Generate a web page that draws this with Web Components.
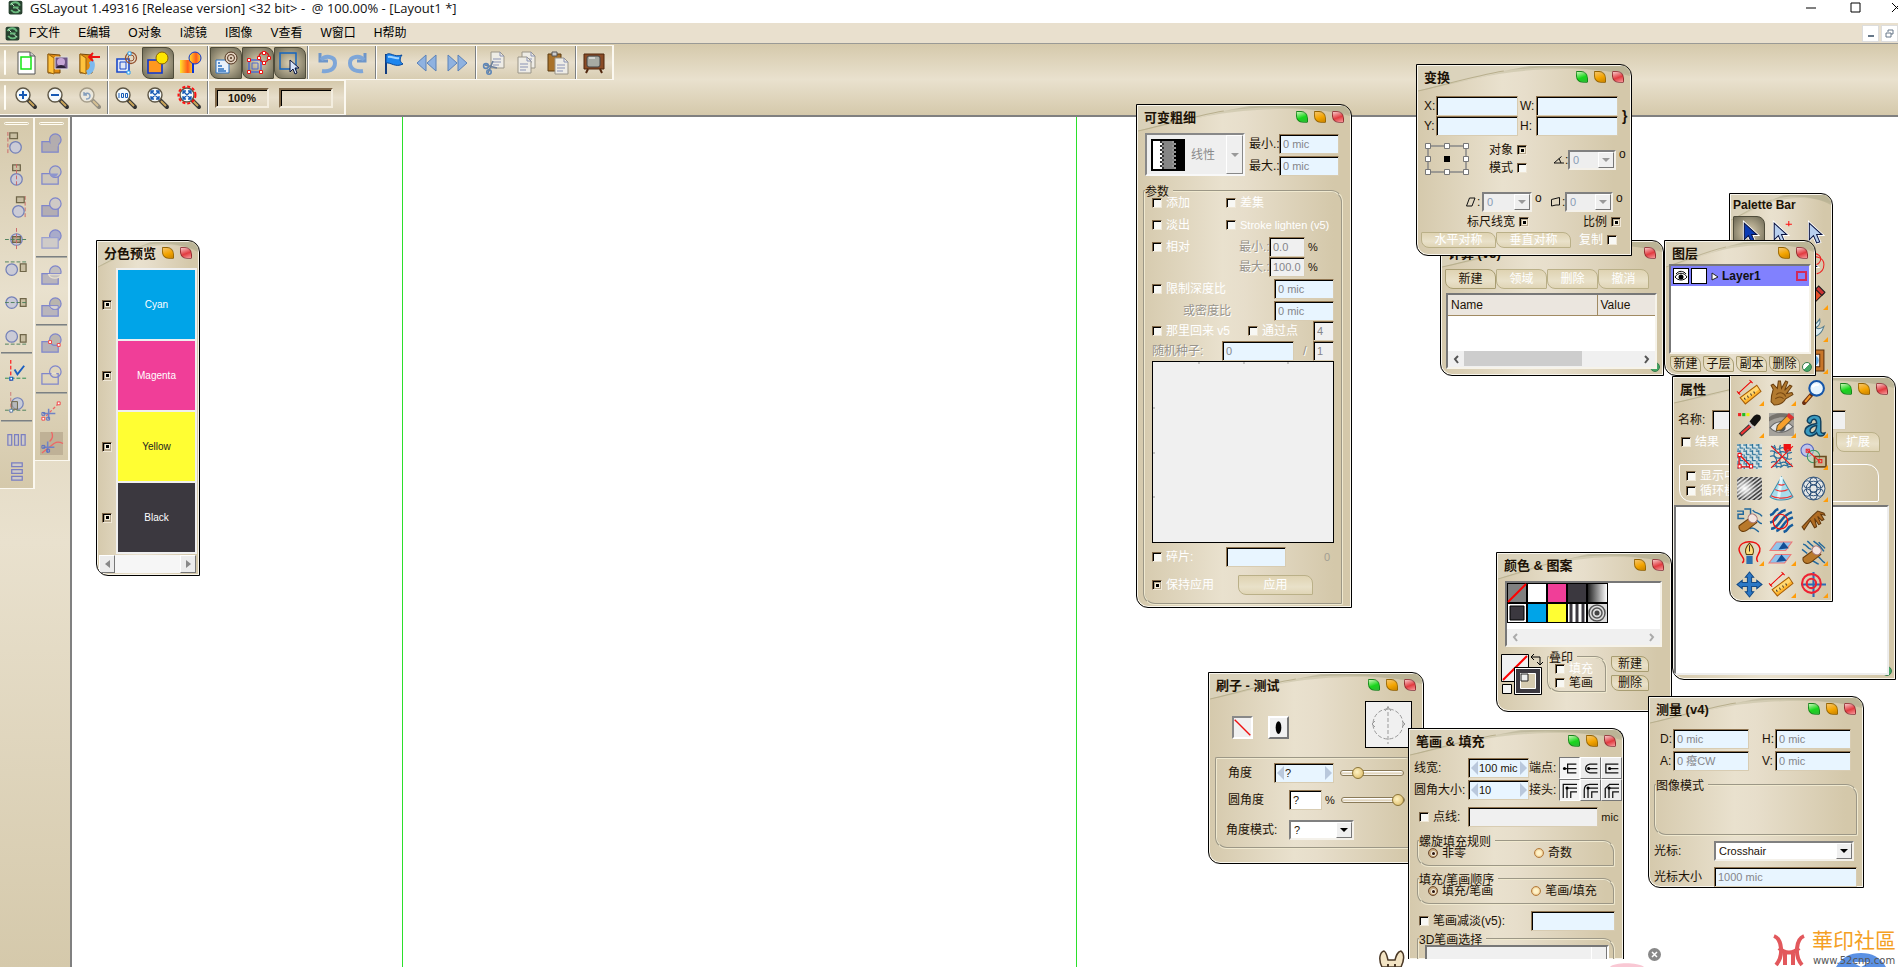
<!DOCTYPE html>
<html lang="zh-CN">
<head>
<meta charset="utf-8">
<title>GSLayout</title>
<style>
  body {
    margin: 0;
    font: 12px/16px "Liberation Sans", "Noto Sans CJK SC", sans-serif;
    color: #1c1206;
  }
</style>
</head>
<body>
<gs-app></gs-app>
<script>
const base = /* css */`
  *, *::before, *::after { box-sizing: border-box; }
  button, input, select { font: inherit; color: inherit; margin: 0; padding: 0; border-radius: 0; }
  svg { display: block; flex: none; }
`;

// Small helper: every element here is a shadow root with its own style and markup
const define = (name, styles, markup) => {
  customElements.define(name, class extends HTMLElement {
    constructor() {
      super();
      this.attachShadow({ mode: "open" });
    }

    connectedCallback() {
      const html = typeof markup === "function" ? markup(this) : markup;
      this.shadowRoot.innerHTML = `<style>${base}${styles}</style>${html}`;
    }
  });
};

const attr = (el, name, fallback = "") => el.getAttribute(name) ?? fallback;

const lens = (inner, extra = "") => `
  <path d="M14 14l7 7" stroke="#333" stroke-width="4" stroke-linecap="round"/>
  <path d="M15 15l5 5" stroke="#c9a45a" stroke-width="2"/>
  <circle cx="9" cy="9" r="7" fill="#f4f9fc" stroke="#5d5645" stroke-width="1.4"/>${inner}${extra}`;
const cursor = (fill, dx = 0) => `<path transform="translate(${dx} 0)" d="M7 3v16l4-4 3 7 3-1-3-7h5z" fill="${fill}" stroke="#fff" stroke-width="2.6"/><path transform="translate(${dx} 0)" d="M7 3v16l4-4 3 7 3-1-3-7h5z" fill="${fill}" stroke="#0b1440"/>`;
const page = (x, y) => `<path d="M${x} ${y}h9l4 4v12h-13z" fill="#eeece6" stroke="#9a9588"/><path d="M${x + 9} ${y}v4h4M${x + 2} ${y + 7}h8m-8 3h8m-8 3h6" fill="none" stroke="#8a93b5"/>`;
const folder = `<path d="M2 3l12 1v18H2z" fill="#e08a10" stroke="#7a4a08"/><path d="M2 3l6 4v16l-6-2z" fill="#ffc23c" stroke="#9a6410"/>`;
const shape = (sq, ci, extra = "") => `<path d="M2 10h17v11H2z" fill="${sq}" stroke="#7f86cb" stroke-width="1.3"/><circle cx="16" cy="8" r="6" fill="${ci}" stroke="#7f86cb" stroke-width="1.3"/>${extra}`;
const ruler = `<path d="M3 17L19 5l4 6L8 23z" fill="#ffb52e" stroke="#a85f08"/><path d="M4 17L19 6l2 3L7 20z" fill="#ffd873"/><path d="M7 17l1 2m2-4l1 2m2-4l1 2m2-4l1 2" stroke="#432"/><path d="M1 13L14 1M0 11l3 3M12 0l3 3" stroke="#e00" fill="none"/>`;
const finger = `<path d="M2 17l11-8 6 5-9 7c-4 3-9 1-8-4z" fill="#b9792b" stroke="#6b3e0b"/><ellipse cx="15" cy="10" rx="4.5" ry="4" transform="rotate(35 15 10)" fill="#f3e4df" stroke="#a77"/>`;

const icons = {
  app: `<rect x="1" y="1" width="22" height="22" rx="3" fill="#27412f"/><path d="M4 8c4-6 12-6 15 1M5 16c4 5 11 5 14 0M8 12h9" stroke="#69b97d" stroke-width="3" fill="none"/><path d="M5 5l5 5m4 3l5 5" stroke="#c9e4cd" stroke-width="1.5"/>`,
  new: `<path d="M4 1h12l5 4v18H4z" fill="#fff" stroke="#555"/><path d="M7 6h10v12H7z" fill="none" stroke="#13e613" stroke-width="1.5"/><path d="M16 1v4h5" fill="#ccc" stroke="#555"/>`,
  open: `${folder}<path d="M9 6h13v12H9z" fill="#6c5484" stroke="#ddd"/><circle cx="15" cy="11" r="4" fill="#c5a6d6"/><path d="M10 17c2-4 8-4 10 0" fill="#2b2138"/>`,
  import: `${folder}<path d="M13 10a8 8 0 0 1-4 12" fill="none" stroke="#7cb9ee" stroke-width="5"/><path d="M22 6H11m4-4l-4 4 4 4" fill="none" stroke="#e11" stroke-width="1.8"/>`,
  outline: `<path d="M3 8h12v13H3z" fill="#dfe6f5" stroke="#1b49c9" stroke-width="1.6"/><path d="M6 11h6v7H6z" fill="none" stroke="#1b49c9"/><circle cx="17" cy="7" r="5.5" fill="none" stroke="#93502f" stroke-width="1.3"/><circle cx="17" cy="7" r="3" fill="none" stroke="#93502f"/><path d="M14 1h3v3h-3zM13 20h3v3h-3z" fill="#fff" stroke="#2aa0ef"/>`,
  fill: `<path d="M2 9h14v13H2z" fill="#ff981f" stroke="#0b35d3" stroke-width="1.6"/><circle cx="16" cy="7" r="6" fill="#ffe600" stroke="#8a6400"/>`,
  grad: `<defs><linearGradient id="g"><stop offset="0" stop-color="#ffe52e"/><stop offset=".6" stop-color="#ff5b1a"/><stop offset="1" stop-color="#ffd52e"/></linearGradient></defs><path d="M2 9h13v13H2z" fill="url(#g)"/><path d="M15 12v10" stroke="#0b35d3" stroke-width="2"/><circle cx="17" cy="7" r="6" fill="url(#g)" stroke="#0b35d3"/>`,
  pattern: `<path d="M2 9h13v13H2z" fill="#e8f1fb" stroke="#2b70c0"/><path d="M4 12h2m-2 3h4m-4 3h6m-6 2h8" stroke="#2b70c0" stroke-width="1.5"/><circle cx="17" cy="7" r="6" fill="#e3d2c0" stroke="#50321d"/><circle cx="17" cy="7" r="3.5" fill="none" stroke="#50321d"/><circle cx="17" cy="7" r="1" fill="#50321d"/>`,
  nodes: `<path d="M3 9h12v12H3z" fill="none" stroke="#4f6bd0" stroke-width="1.5"/><path d="M6 12h6v6H6z" fill="none" stroke="#4f6bd0"/><circle cx="18" cy="6" r="5" fill="none" stroke="#c22" stroke-width="1.3"/><g fill="#fff" stroke="#e11"><path d="M1.500 7.500h3v3h-3zM1.500 19.500h3v3h-3zM13.500 19.500h3v3h-3zM11.500 5.500h3v3h-3zM16.500.5h3v3h-3zM21.500 5.500h3v3h-3zM16.500 10.500h3v3h-3z"/></g>`,
  select: `<path d="M2 2h16v16H2z" fill="none" stroke="#1565c0" stroke-width="1.5"/><path d="M12 9v12l3-3 2 5 2-1-2-5h4z" fill="#d7e3f8" stroke="#06123c"/>`,
  undo: `<path d="M6 2v8h8" fill="none" stroke="#6e96c9" stroke-width="3"/><path d="M7 9c4-5 14-4 14 3s-7 9-13 8" fill="none" stroke="#7ea6d8" stroke-width="4"/>`,
  redo: `<path d="M19 2v8h-8" fill="none" stroke="#6e96c9" stroke-width="3"/><path d="M18 9C14 4 4 5 4 12s7 9 13 8" fill="none" stroke="#7ea6d8" stroke-width="4"/>`,
  flag: `<path d="M4 3v20" stroke="#123d80" stroke-width="2"/><path d="M4 4c4-4 8 3 16 0-3 4-2 7 1 9-8 4-12-2-17-1z" fill="#1e86ee" stroke="#0c4a9a"/><path d="M6 6c4-1 7 2 11 1" stroke="#9fd3ff" stroke-width="2" fill="none"/>`,
  back: `<path d="M12 4v16l-9-8zM22 4v16l-9-8z" fill="#8fb2e0" stroke="#5b82b8"/>`,
  forward: `<path d="M12 4v16l9-8zM2 4v16l9-8z" fill="#8fb2e0" stroke="#5b82b8"/>`,
  cut: `${page(9, 1)}<path d="M3 14l12 3M11 10L6 22" stroke="#6b7f9c" stroke-width="1.6"/><circle cx="4" cy="15" r="2.4" fill="none" stroke="#5e87b8" stroke-width="1.6"/><circle cx="7" cy="21" r="2.2" fill="none" stroke="#5e87b8" stroke-width="1.6"/>`,
  copy: `${page(8, 1)}${page(4, 6)}`,
  paste: `<path d="M2 3h13v17H2z" fill="#a9722a" stroke="#5b3a10"/><path d="M6 1h5v4H6z" fill="#ccc" stroke="#555"/>${page(9, 7)}`,
  screen: `<path d="M2 3h20v15H2z" fill="#8a4b26" stroke="#51280f"/><rect x="5" y="5" width="13" height="11" rx="2" fill="#a7aaa3" stroke="#444"/><path d="M7 7h6" stroke="#fff"/><path d="M6 18l-2 4M18 18l2 4" stroke="#51280f" stroke-width="2"/>`,
  zoomin: lens(`<path d="M5 9h8M9 5v8" stroke="#1559b5" stroke-width="2"/>`),
  zoomout: lens(`<path d="M5 9h8" stroke="#1559b5" stroke-width="2"/>`),
  zoomback: `<g opacity=".45">${lens(`<path d="M6 6v3h3M6 9c2-3 6-2 6 1s-3 3-4 3" stroke="#1559b5" stroke-width="1.4" fill="none"/>`)}</g>`,
  zoom100: lens(`<path d="M5 7v5M7.500 7.500h2v4h-2zM11.500 7.500h2v4h-2z" stroke="#1559b5" fill="none"/>`),
  zoomfit: lens(`<path d="M5 5l8 8M13 5l-8 8M5 8V5h3M10 5h3v3M5 10v3h3M13 10v3h-3" stroke="#1559b5" stroke-width="1.3" fill="none"/>`),
  zoomall: lens(`<path d="M5 5l8 8M13 5l-8 8M5 8V5h3M10 5h3v3M5 10v3h3M13 10v3h-3" stroke="#1559b5" stroke-width="1.3" fill="none"/>`, `<circle cx="9" cy="9" r="8.5" fill="none" stroke="#f11" stroke-width="2" stroke-dasharray="3 2"/>`),

  alignleft: `<path d="M3 0v24" stroke="#c66" stroke-dasharray="4 2"/><path d="M5 1h8v6H5z" fill="#c9bfa3" stroke="#6f6649" stroke-width="1.3"/><circle cx="11" cy="16" r="6" fill="#cbcbd6" stroke="#7481b8" stroke-width="1.3"/>`,
  aligncenter: `<path d="M8 1h8v6H8z" fill="#c9bfa3" stroke="#6f6649" stroke-width="1.3"/><circle cx="12" cy="16" r="6" fill="#cbcbd6" stroke="#7481b8" stroke-width="1.3"/><path d="M12 0v24" stroke="#c66" stroke-dasharray="4 2"/>`,
  alignright: `<path d="M21 0v24" stroke="#c66" stroke-dasharray="4 2"/><path d="M12 1h8v6h-8z" fill="#c9bfa3" stroke="#6f6649" stroke-width="1.3"/><circle cx="14" cy="16" r="6" fill="#cbcbd6" stroke="#7481b8" stroke-width="1.3"/>`,
  alignmid: `<circle cx="12" cy="12" r="6" fill="#cbcbd6" stroke="#7481b8" stroke-width="1.3"/><path d="M8 9h8v6H8z" fill="#b8a88e" stroke="#6f6649" stroke-width="1.3"/><path d="M12 0v24" stroke="#c66" stroke-dasharray="4 2"/><path d="M0 12h24" stroke="#4d805c" stroke-dasharray="4 2"/>`,
  aligntop: `<path d="M0 2h24" stroke="#4d805c" stroke-dasharray="4 2"/><circle cx="7" cy="10" r="6" fill="#cbcbd6" stroke="#7481b8" stroke-width="1.3"/><path d="M16 4h6v8h-6z" fill="#c9bfa3" stroke="#6f6649" stroke-width="1.3"/>`,
  alignvert: `<circle cx="7" cy="11" r="6" fill="#cbcbd6" stroke="#7481b8" stroke-width="1.3"/><path d="M16 7h6v8h-6z" fill="#c9bfa3" stroke="#6f6649" stroke-width="1.3"/><path d="M0 11h24" stroke="#4d805c" stroke-dasharray="4 2"/>`,
  alignbottom: `<path d="M0 21h24" stroke="#4d805c" stroke-dasharray="4 2"/><circle cx="7" cy="13" r="6" fill="#cbcbd6" stroke="#7481b8" stroke-width="1.3"/><path d="M16 11h6v8h-6z" fill="#c9bfa3" stroke="#6f6649" stroke-width="1.3"/>`,
  origin: `<path d="M6 0v24" stroke="#f22" stroke-width="1.3" stroke-dasharray="4 2"/><path d="M0 19h24" stroke="#2a8a4a" stroke-dasharray="4 2"/><path d="M10 10l3 5 7-9" fill="none" stroke="#1b5fc0" stroke-width="2"/><path d="M5 18h3v3H5z" fill="#fff" stroke="#1b5fc0" stroke-width="1.3"/>`,
  originshape: `<path d="M6 0v24" stroke="#c77" stroke-dasharray="4 2"/><path d="M0 19h24" stroke="#4d805c" stroke-dasharray="4 2"/><circle cx="13" cy="12" r="6" fill="#c8ccd8" stroke="#7481b8" stroke-width="1.3"/><path d="M7 10h6v8H7z" fill="#a9a79f88" stroke="#6f6649"/><path d="M5 18h3v3H5z" fill="#fff" stroke="#5980aa"/>`,
  spreadh: `<path d="M3 7h4v11H3zM10 7h4v11h-4zM17 7h4v11h-4z" fill="#cfcbc9" stroke="#7b7fc0" stroke-width="1.3"/>`,
  spreadv: `<path d="M7 3h11v4H7zM7 10h11v4H7zM7 17h11v4H7z" fill="#cfcbc9" stroke="#7b7fc0" stroke-width="1.3"/>`,
  union: `<circle cx="16" cy="8" r="6" fill="#b3adaf" stroke="#7f86cb" stroke-width="1.3"/><path d="M2 10h8c1 3 3 4 9 4v7H2z" fill="#b3adaf" stroke="#7f86cb" stroke-width="1.3"/><path d="M11 9h8v6h-8z" fill="#b3adaf"/>`,
  intersect: shape("#cdc6bb", "#c9c5bd", `<path d="M10 10h9c-2 5-8 5-9 0z" fill="#8d95cd"/>`),
  subtract: shape("#b3adb3", "#cfcac6"),
  over: `<circle cx="16" cy="8" r="6" fill="#a9abca" stroke="#7f86cb" stroke-width="1.3"/><path d="M2 10h17v11H2z" fill="#cfcbc8" stroke="#9aa0d0" stroke-width="1.3"/>`,
  divide: shape("#b9b5bc", "#c2bfc0", `<path d="M9 11h13c-2 5-11 5-13 0z" fill="#c2bfc0" stroke="#e9e1ce" stroke-width="1.3"/><path d="M11 10h10" stroke="#7f86cb"/>`),
  cross: shape("#b9b5bc", "#b9b5ae", `<path d="M10 10h9v3c-3 2-8 1-9-3z" fill="#d8d4d0" stroke="#7f86cb"/>`),
  points: shape("#b5b1b8", "#bcb6b0", `<path d="M9 9h3v3H9zM18 12h3v3h-3z" fill="#fff" stroke="#e44"/>`),
  breaks: shape("none", "none", `<path d="M12 10h5" stroke="#e9e1ce" stroke-width="2"/>`),
  snip: `<path d="M3 20L20 3" stroke="#e66" stroke-dasharray="3 2" stroke-width="1.4"/><path d="M18 2h3v3h-3zM2 18h3v3H2z" fill="#fff" stroke="#e44"/><path d="M3 14h13M9 9v11" stroke="#6f83c6" stroke-width="1.6"/><path d="M7 18h3v3H7zM2 13h3v3H2z" fill="none" stroke="#5a6fc0"/>`,
  sniparea: `<path d="M0 0h24v24H0z" fill="#bfb196"/><path d="M12 0c3 5 0 8-2 10M24 12c-6-3-9-1-12 2L2 22" stroke="#e66" fill="none" stroke-width="1.4"/><path d="M3 16h12M8 10v12" stroke="#6f83c6" stroke-width="1.6"/><path d="M7 18h3v3H7zM2 14h3v3H2z" fill="none" stroke="#5a6fc0"/>`,

  arrow: cursor("#0a3bb5"),
  arrowplus: cursor("#b9d0f0", -2) + `<path d="M19 1v5M16 4h6" stroke="#f11"/>`,
  arrowlight: cursor("#b9d0f0", 1),
  lasso: `<path d="M8 3c8-4 14 2 9 8-5 3-12 0-9-4 4-5 14-2 14 5 0 5-3 8-7 9" fill="none" stroke="#e22"/>${cursor("#222", -4)}`,
  tube: `<path d="M2 20L16 4l6 5L8 23z" fill="#e5512b" stroke="#222"/><path d="M14 5l3-3 6 6-3 3z" fill="#c33" stroke="#222"/><path d="M5 18l6 4" stroke="#ddd" stroke-width="3"/>`,
  bird: `<path d="M3 18c8 4 16 2 19-8-4 3-6 3-8 1 3-1 5-4 4-8-4 6-9 8-15 15z" fill="#d8e9ee" stroke="#537b8c"/>`,
  frame: `<path d="M1 2h21v20H1z" fill="#c8762a" stroke="#5b300c"/><path d="M5 6h13v12H5z" fill="#e9f1f8" stroke="#5b300c"/><circle cx="12" cy="12" r="5" fill="#67a9df"/>`,
  ruler,
  hand: `<path d="M2 21c0-6 1-9 2-12L2 5l2-1 4 4L9 1l2 0 1 7 4-7 2 1-3 8 5-5 2 1-5 7 5-1 1 2-7 4c-2 4-6 6-11 6z" fill="#b27a30" stroke="#6b3f0e"/><path d="M7 14c3-3 8-2 9 2M6 18c3-2 6-2 8 0" stroke="#7b4a12" fill="none"/>`,
  magnify: `<path d="M10 14l-7 8" stroke="#6b2f10" stroke-width="4" stroke-linecap="round"/><path d="M9 15l-5 6" stroke="#f19a2e" stroke-width="2"/><circle cx="15" cy="8" r="7" fill="#e6f4fe" stroke="#1555a8" stroke-width="2"/><path d="M11 7c1-2 4-3 6-2" stroke="#fff" stroke-width="2" fill="none"/>`,
  dropper: `<path d="M1 1h3v3H1z" fill="#e22"/><path d="M5 1h3v3H5z" fill="#2b2"/><path d="M9 1h3v3H9z" fill="#ee1"/><path d="M3 22l12-11" stroke="#333" stroke-width="4"/><path d="M4 21l10-9" stroke="#e33" stroke-width="2"/><path d="M12 9l4-5c4-4 9 0 6 4l-5 6z" fill="#111"/><path d="M11 10l6 6" stroke="#ccc" stroke-width="2"/>`,
  pencil: `<path d="M0 1h24v22H0z" fill="#a5a29c"/><path d="M0 5c7-5 16-5 24 0v3C16 4 8 4 0 9z" fill="#77736d"/><path d="M1 15c5-7 15-8 22-1-6 6-16 8-22 1z" fill="#e2e2e2" stroke="#666"/><circle cx="12" cy="15" r="4" fill="#4f5357"/><path d="M8 13L18 3l4 4-10 10-5 1z" fill="#f7a02c" stroke="#653"/><path d="M17 4l2-3 5 4-3 3z" fill="#d33"/>`,
  text: `<path d="M6 8c1-6 14-7 13 1v9c0 2 1 3 4 2-1 4-7 4-8 0-5 6-13 2-11-3 1-4 6-5 11-6 0-5-4-5-5-2 0 3-4 2-4-1zM15 13c-7 1-8 7-4 7 3-1 4-3 4-7z" fill="#3b9bc0" stroke="#12405e" stroke-width="1.4"/>`,
  mesh: `<defs><pattern id="m" width="6" height="6" patternUnits="userSpaceOnUse"><path d="M0 1h3v3h3M3 0v1M1 4v2" fill="none" stroke="#1e6a94" stroke-width="1.1"/></pattern></defs><path d="M0 0h24v24H0z" fill="#d9e4e4"/><path d="M0 0h24v24H0z" fill="url(#m)"/><path d="M2 10v12h12z" fill="none" stroke="#e11" stroke-width="1.3"/><path d="M1 9h3v3H1zM1 20h3v3H1zM12 20h3v3h-3z" fill="#fff" stroke="#e11"/>`,
  meshcut: `<g fill="none" stroke="#2a6f9c" stroke-width="1.1"><path d="M2 2c5 1 4 5 9 2s5 5 10 2M1 7c5-2 4 4 9 1s6 3 12 0M1 12c6-3 5 4 10 1s5 4 11 1M2 18c4-4 6 3 10 0s6 4 10 1M3 22c4-3 8 2 10-1s6 3 9 0M5 1c4 6-3 8 1 12s-2 7 2 10M11 1c-3 6 3 8 0 12s3 6 0 10M17 1c-4 6 4 9 0 13s3 6 1 9"/></g><path d="M2 2l21 20M23 2L2 23" stroke="#e11" fill="none"/><path d="M14 0h7v7l-3-2-2 3-2-3z" fill="#e11"/>`,
  blend: `<circle cx="6" cy="6" r="6" fill="#bcc4ea" stroke="#5263c0"/><circle cx="12" cy="12" r="6" fill="#b9d9c488" stroke="#3a9464"/><path d="M13 12h11v10H13z" fill="#c0a67e88" stroke="#6a4a1d" stroke-width="1.6"/><path d="M6 6l12 11" stroke="#e22"/><path d="M5 5h3v3H5zM17 15h3v3h-3z" fill="none" stroke="#e22"/>`,
  stripes: `<defs><pattern id="s" width="2" height="3" patternUnits="userSpaceOnUse" patternTransform="rotate(-38)"><path d="M0 0h2v1.500H0z" fill="#444"/></pattern><radialGradient id="w" cx=".3" cy=".5" r=".5"><stop offset="0" stop-color="#fff"/><stop offset="1" stop-color="#fff0"/></radialGradient></defs><rect y="1" width="24" height="22" rx="3" fill="#d0d0d0"/><rect y="1" width="24" height="22" rx="3" fill="url(#s)"/><rect y="1" width="24" height="22" rx="3" fill="url(#w)"/>`,
  cone: `<path d="M12 1L1 20c5 4 17 4 22 0z" fill="#a8dcec" stroke="#3f8fae"/><path d="M12 1L9 22" stroke="#e2f7fc" stroke-width="3"/><path d="M9 8c2 1 4 1 6 0M6 13c3 2 9 2 12 0M2 19c5 3 15 3 20 0" stroke="#e33" fill="none"/>`,
  rosette: `<circle cx="12" cy="12" r="11" fill="#e4e6e6"/><g fill="none" stroke="#264a74" stroke-width=".9"><circle cx="12" cy="12" r="11"/><circle cx="12" cy="12" r="3.500"/><circle cx="12" cy="5" r="3.500"/><circle cx="12" cy="19" r="3.500"/><circle cx="6" cy="8" r="3.500"/><circle cx="18" cy="8" r="3.500"/><circle cx="6" cy="16" r="3.500"/><circle cx="18" cy="16" r="3.500"/><circle cx="12" cy="12" r="7"/></g>`,
  smudge: `<path d="M0 3h6v3H1v4h6M7 1h6v5M15 2c3 4 7 2 9 6M16 9c4 3 5 6 8 6M12 20c4-3 7 2 9 3" fill="none" stroke="#22689c" stroke-width="1.4"/>${finger}`,
  hatch: `<path d="M1 7q3-1 4-3t4-3M1 14q4-1 7-6t8-6M2 20q4 0 9-7t11-9M7 22q4-1 7-6t9-7M14 23q3-1 4-3t5-4" fill="none" stroke="#155b9c" stroke-width="2.4"/><circle cx="11" cy="13" r="7" fill="none" stroke="#e11" stroke-width="1.2"/>`,
  comb: `<path d="M1 18C6 13 11 7 16 3l6 2 1 2-4-1 3 5-2 1-4-4 3 7-2 1-4-6 2 8-2 1-4-7-6 9z" fill="#b06c23" stroke="#63380c"/>`,
  pen: `<path d="M5 22c5-4-4-8-3-14C3 0 20-1 22 8c1 6-6 8-2 13" fill="none" stroke="#e11" stroke-width="1.4"/><path d="M12 3c4 4 5 7 3 11H9C7 10 8 7 12 3z" fill="#ffdc7a" stroke="#5c4008"/><path d="M9 15h6v8H9z" fill="#2a6fae"/><path d="M12 5v6" stroke="#333"/>`,
  planes: `<path d="M7 2h15l-6 8H1z" fill="#8fc4ec" stroke="#e77"/><path d="M9 9l5-7 5 6z" fill="#124f96"/><path d="M6 14h15l-6 8H0z" fill="#8fc4ec" stroke="#e77"/><path d="M7 21l5-7 5 6z" fill="#124f96"/>`,
  smudge2: `<path d="M2 4c4 0 4 5 8 5M6 1c3 2 4 5 8 6M12 1c3 3 6 3 10 10M17 2c2 3 4 3 6 6M14 15c4 0 5 5 9 7M9 20c4-1 5 3 8 3M1 9l5 4" fill="none" stroke="#22689c" stroke-width="1.4"/>${finger}`,
  move: `<path d="M12 0l4 5h-2v5h5V8l5 4-5 4v-2h-5v5h2l-4 5-4-5h2v-5H5v2l-5-4 5-4v2h5V5H8z" fill="#2b78c6" stroke="#134a86"/>`,
  target: `<path d="M12 0v24M0 12h24" stroke="#2d6bb5" stroke-width="2"/><circle cx="10" cy="11" r="9" fill="none" stroke="#e23" stroke-width="2"/><circle cx="10" cy="11" r="4.500" fill="none" stroke="#e23" stroke-width="2"/>`,

  angle: `<path d="M2 18h20M2 18L17 5M12 9l4 9" fill="none" stroke="#111" stroke-width="2"/>`,
  skew: `<path d="M9 4h11l-6 16H3z" fill="none" stroke="#111" stroke-width="2"/>`,
  skew2: `<path d="M3 7l16-4v15h-7l-9 2z" fill="none" stroke="#111" stroke-width="2"/>`,
  none: `<path d="M1 1l22 22" stroke="#e11" stroke-width="2"/>`,
  brush: `<ellipse cx="12" cy="12" rx="4" ry="9"/>`,
  capbutt: `<path d="M3 12h6M9 4v16M9 5h14M9 12h14M9 19h14" fill="none" stroke="#111" stroke-width="2"/><circle cx="4" cy="12" r="2.500"/>`,
  capround: `<path d="M23 5H11c-9 2-9 12 0 14h12M9 12h14" fill="none" stroke="#111" stroke-width="2"/><circle cx="9" cy="12" r="2.500"/>`,
  capsquare: `<path d="M23 5H3v14h20M8 12h15" fill="none" stroke="#111" stroke-width="2"/><circle cx="9" cy="12" r="2.500"/>`,
  joinmiter: `<path d="M2 24V2h22M8 24V8h16M14 24V14h10" fill="none" stroke="#111" stroke-width="2"/><circle cx="8" cy="8" r="2.500"/>`,
  joinround: `<path d="M2 24V11q0-9 9-9h13M8 24V8h16M14 24V14h10" fill="none" stroke="#111" stroke-width="2"/><circle cx="8" cy="8" r="2.500"/>`,
  joinbevel: `<path d="M2 24V9l7-7h15M8 24V8h16M14 24V14h10" fill="none" stroke="#111" stroke-width="2"/><circle cx="8" cy="8" r="2.500"/>`,
};

define("gs-icon", /* css */`
  :host { display: block; width: var(--icon, 24px); height: var(--icon, 24px); flex: none; }
  svg { width: 100%; height: 100%; overflow: visible; }
`, el => `<svg viewBox="0 0 24 24" aria-hidden="true">${icons[attr(el, "name")]}</svg>`);

define("gs-tool", /* css */`
  :host { display: block; }
  button {
    position: relative;
    display: grid;
    place-items: center;
    width: 32px;
    height: 32px;
    border: 0;
    background: none;
  }
  :host([active]) button {
    border: 1px solid #4f4c3a;
    border-radius: 1px 8px 1px 8px;
    background: radial-gradient(#ddd2b6, #aaa187 45%, #6a6652);
  }
  :host([more]) button::after {
    content: "";
    position: absolute;
    right: 1px;
    bottom: 2px;
    border-left: 5px solid transparent;
    border-bottom: 5px solid #ff9d0a;
  }
`, el => `<button type="button" aria-label="${attr(el, "icon")}"><gs-icon name="${attr(el, "icon")}"></gs-icon></button>`);

define("gs-button", /* css */`
  :host { display: block; width: var(--w, auto); }
  button {
    display: block;
    width: 100%;
    height: var(--h, 20px);
    border: 1px solid #a89d72;
    border-radius: 1px 8px 1px 8px;
    background: linear-gradient(#dfd3b2, #e9e1c9 60%, #e0d5b6);
    line-height: 14px;
    white-space: nowrap;
  }
  button:disabled { color: #fff; border-color: #bab088; }
`, el => `<button type="button"${el.hasAttribute("off") ? " disabled" : ""}><slot></slot></button>`);

define("gs-check", /* css */`
  :host { display: block; }
  label { display: flex; align-items: center; gap: 4px; white-space: nowrap; }
  :host([before]) label { flex-direction: row-reverse; justify-content: flex-start; }
  :host([off]) label { color: #fff; }
  input {
    appearance: none;
    display: grid;
    place-items: center;
    width: 10px;
    height: 10px;
    flex: none;
    border: 1px solid;
    border-color: #7d6546 #efe7d6 #efe7d6 #7d6546;
    background: #f8f8f4;
    box-shadow: inset 1px 1px #000;
  }
  input:checked { background: #b5a68b; }
  input:checked::after { content: ""; width: 3px; height: 3px; background: #000; box-shadow: 0 0 0 1px #f4eedd; }
  input[type=radio] {
    border-radius: 50%;
    border-color: #b37a3c;
    background: #fff3c9;
    box-shadow: inset 0 0 2px #c77f2a;
  }
  input[type=radio]:checked { background: #c9b596; border-color: #6b4a32; }
  input[type=radio]:checked::after { border-radius: 50%; background: #2b120a; }
`, el => `<label><input type="${el.hasAttribute("radio") ? "radio" : "checkbox"}"${el.hasAttribute("on") ? " checked" : ""}${el.hasAttribute("off") ? " disabled" : ""}><span><slot></slot></span></label>`);

define("gs-field", /* css */`
  :host { display: block; }
  label { display: flex; align-items: center; white-space: nowrap; }
  .name { width: var(--label, auto); flex: none; }
  :host([dim]) .name { color: #98948c; text-shadow: 1px 1px #fff; }
  .box {
    display: flex;
    align-items: center;
    width: var(--w, 60px);
    height: 20px;
    flex: none;
    border: 1px solid;
    border-color: #8f7450 #d8ccb2 #d8ccb2 #8f7450;
    background: #e8f5ff;
    box-shadow: inset 1px 1px #000;
  }
  :host([plain]) .box { background: #f0f0f0; }
  :host([white]) .box { background: #fff; }
  input {
    width: 100%;
    min-width: 0;
    flex: 1;
    padding: 0 0 0 3px;
    border: 0;
    background: none;
    font-size: 11px;
  }
  :host([spin]) input { padding: 0 0 0 1px; }
  input:disabled { color: #85858a; }
  .unit { padding-left: 3px; font-size: 11px; }
`, el => {
  const spin = el.hasAttribute("spin");
  return `
    <label>
      <span class="name">${attr(el, "name")}</span>
      <span class="box">
        ${spin ? `<svg width="9" height="14"><path d="M9 0v14L2 7z" fill="#b9c8dc"/></svg>` : ""}
        <input type="text" value="${attr(el, "value")}"${el.hasAttribute("off") ? " disabled" : ""}>
        ${spin ? `<svg width="8" height="14"><path d="M0 0v14l7-7z" fill="#b9c8dc"/></svg>` : ""}
      </span>
      ${el.hasAttribute("unit") ? `<span class="unit">${attr(el, "unit")}</span>` : ""}
    </label>`;
});

define("gs-select", /* css */`
  :host { display: block; }
  label { display: flex; align-items: center; white-space: nowrap; }
  .name { display: flex; align-items: center; width: var(--label, auto); flex: none; --icon: 12px; }
  .box {
    display: grid;
    width: var(--w, 48px);
    height: 20px;
    flex: none;
    border: 2px solid;
    border-color: #808080 #f4f1ea #f4f1ea #808080;
    background: #fff;
  }
  select, .arrow { grid-area: 1 / 1; }
  select { appearance: none; width: 100%; min-width: 0; padding: 0 3px; border: 0; background: none; font-size: 11px; line-height: 14px; }
  .arrow {
    justify-self: end;
    display: grid;
    place-items: center;
    width: 16px;
    background: #efefef;
    border: 1px solid;
    border-color: #fff #777 #777 #fff;
    pointer-events: none;
  }
  :host([off]) .box { background: #eee; }
  :host([off]) select { color: #8a9bb5; opacity: 1; }
  :host([off]) .arrow path { fill: #999; }
`, el => `
  <label>
    <span class="name">${el.hasAttribute("icon") ? `<gs-icon name="${attr(el, "icon")}"></gs-icon>` : ""}${attr(el, "name")}</span>
    <span class="box">
      <select${el.hasAttribute("off") ? " disabled" : ""} aria-label="${attr(el, "icon", attr(el, "name"))}"><option>${attr(el, "value")}</option></select>
      <span class="arrow"><svg width="8" height="4"><path d="M0 0h8L4 4z"/></svg></span>
    </span>
  </label>`);

define("gs-group", /* css */`
  :host { display: block; }
  fieldset {
    height: 100%;
    min-width: 0;
    margin: 0;
    padding: 0;
    border: 2px groove #f0e9cf;
    border-radius: 2px 12px 2px 12px;
  }
  :host([pale]) fieldset { border: 1px solid #fff; }
  legend { height: 12px; padding: 0 4px 0 0; line-height: 14px; white-space: nowrap; }
`, el => `<fieldset>${el.hasAttribute("name") ? `<legend>${attr(el, "name")}</legend>` : ""}<slot></slot></fieldset>`);

define("gs-scrollbar", /* css */`
  :host { display: flex; height: 16px; background: #f0f0f0; align-items: center; }
  button { width: 16px; height: 16px; flex: none; border: 0; background: none; display: grid; place-items: center; color: #555; }
  .track { flex: 1; height: 100%; }
  .thumb { height: 15px; width: var(--thumb, 0); background: #cdcdcd; }
  :host([off]) button { color: #aaa; }
  :host([classic]) { background: #f6f6f6; height: 18px; }
  :host([classic]) button { height: 18px; background: #ececec; border: 1px solid; border-color: #fff #777 #777 #fff; color: #888; }
`, el => {
  const arrow = el.hasAttribute("classic")
    ? [`M5 0v8L0 4z`, `M0 0v8l5-4z`].map(d => `<svg width="5" height="8"><path d="${d}" fill="currentColor"/></svg>`)
    : [`M5 1L2 4l3 4`, `M1 1l3 3-3 4`].map(d => `<svg width="6" height="9"><path d="${d}" fill="none" stroke="currentColor" stroke-width="2"/></svg>`);
  return `
    <button type="button" aria-label="left">${arrow[0]}</button>
    <div class="track"><div class="thumb"></div></div>
    <button type="button" aria-label="right">${arrow[1]}</button>`;
});

define("gs-panel", /* css */`
  :host {
    display: flex;
    flex-direction: column;
    height: 100%;
    position: relative;
    overflow: hidden;
    border: 1px solid #000;
    border-radius: 0 12px 0 12px;
    background: linear-gradient(90deg, #d5c9ac, #e9e1ce 40%, #e7decb 50%, #d4c8aa 92%);
    box-shadow: inset 0 0 0 1px #f8f5ec;
  }
  :host([cut]) { border-bottom: 0; border-radius: 0 12px 0 0; }
  .curve { position: absolute; inset: 1px 1px auto 1px; width: calc(100% - 2px); height: 28px; }
  header {
    position: relative;
    display: flex;
    align-items: center;
    height: 28px;
    flex: none;
    padding: 0 7px 2px;
  }
  :host([narrow]) header { height: 22px; padding: 0 3px; }
  h2 { flex: 1; margin: 0; font-size: 13px; line-height: 16px; white-space: nowrap; }
  :host([narrow]) h2 { font-size: 12px; }
  .leaves { display: flex; gap: 6px; padding-bottom: 3px; }
  .leaves button { width: 12px; height: 12px; border: 1px solid #0005; border-radius: 1px 7px 1px 7px; }
  .green { background: linear-gradient(160deg, #c8f5b5, #18d71c 55%, #2fb536); }
  .orange { background: linear-gradient(160deg, #f5c46a, #f3a400 55%, #c98400); }
  .red { background: linear-gradient(160deg, #f7c6c6, #e23b40 55%, #f59a9a); }
  .body { position: relative; display: flex; flex-direction: column; flex: 1; min-height: 0; }
  .size { position: absolute; right: 3px; bottom: 3px; width: 10px; height: 10px; border-radius: 50%; border: 1px solid #357a4b; background: linear-gradient(135deg, #fff 45%, #43a564 50%); }
`, el => {
  const leaves = { g: "green", o: "orange", r: "red" };
  return `
    <svg class="curve" viewBox="0 0 210 28" preserveAspectRatio="none">
      <path d="M0 0h210v8C160 0 110 3 80 8 50 13 20 22 0 25z" fill="#c3bda0" opacity=".55"/>
      <path d="M0 25C20 18 60 14 85 5L120 0H0z" fill="#e2dac6" opacity=".6"/>
      <path d="M0 25C25 19 60 9 85 5" fill="none" stroke="#b8af8d"/>
      <path d="M85 5c40-6 90-4 125 5V0H110z" fill="#a8a386" opacity=".45"/>
    </svg>
    <header>
      <h2>${attr(el, "heading")}</h2>
      <div class="leaves">${[...attr(el, "leaves")].map(k => `<button type="button" class="${leaves[k]}" aria-label="${leaves[k]}"></button>`).join("")}</div>
    </header>
    ${el.hasAttribute("sizer") ? `<span class="size"></span>` : ""}
    <div class="body"><slot></slot></div>`;
});

const row = /* css */`
  :host { display: block; }
  .row { display: flex; align-items: center; height: 20px; flex: none; }
  .tall { height: 24px; }
  .end { margin-left: auto; }
`;

define("separation-window", /* css */`${row}
  table { border-collapse: collapse; width: 98px; margin: -1px 2px 0; }
  td { height: 71px; padding: 0; text-align: center; font-size: 10px; }
  td:first-child { width: 18px; padding-left: 3px; }
  td + td { border: 2px solid #efefef; color: #fff; }
  gs-scrollbar { margin: 1px 3px 0 2px; }
`, `
  <gs-panel heading="分色预览" leaves="or">
    <table>
      ${[["Cyan", "#00a4e8"], ["Magenta", "#f03e98"], ["Yellow", "#fffe33"], ["Black", "#3b383f"]].map(([ink, color]) => `
      <tr><td><gs-check on></gs-check></td><td style="background:${color};${ink === "Yellow" ? "color:#222" : ""}">${ink}</td></tr>`).join("")}
    </table>
    <gs-scrollbar classic></gs-scrollbar>
  </gs-panel>`);

define("variable-window", /* css */`${row}
  .top { display: flex; gap: 4px; padding-left: 8px; }
  .combo {
    display: flex;
    align-items: center;
    gap: 6px;
    width: 100px;
    height: 43px;
    padding-left: 4px;
    border: 2px solid;
    border-color: #888 #f8f8f8 #f8f8f8 #888;
    background: #efefef;
    color: #8a8a8a;
    font-size: 12px;
  }
  .combo i { margin-left: auto; width: 17px; height: 39px; display: grid; place-items: center; border: 1px solid; border-color: #fff #888 #888 #fff; }
  .pair { display: flex; flex-direction: column; gap: 2px; padding-top: 1px; }
  .params { height: 420px; margin: 9px 8px 0 6px; }
  .inner { margin-top: -4px; padding: 0 7px 0 7px; }
  .inner gs-check:first-child { width: 74px; }
  .limits { padding-left: 87px; }
  .wide { margin-left: auto; --w: 60px; }
  .small { --w: 21px; }
  .canvas { height: 182px; border: 1px solid #000; background: #f0f0f0; }
  .canvas svg { width: 100%; height: 180px; }
`, `
  <gs-panel heading="可变粗细" leaves="gor">
    <div class="top">
      <button type="button" class="combo">
        <svg width="34" height="32"><path d="M0 0h34v32H0z"/><path d="M2 2h9v28H2z" fill="#fff"/><path d="M11 2h12v28H11z" fill="#858585"/><path d="M10 2v28M12 4v28" stroke="#333" stroke-width="2" stroke-dasharray="2 2"/><path d="M22 2v28M24 4v28" stroke="#999" stroke-width="2" stroke-dasharray="2 2"/></svg>
        线性
        <i><svg width="8" height="4"><path d="M0 0h8L4 4z" fill="#999"/></svg></i>
      </button>
      <div class="pair">
        <gs-field name="最小.:" value="0 mic" off style="--label:30px"></gs-field>
        <gs-field name="最大.:" value="0 mic" off style="--label:30px"></gs-field>
      </div>
    </div>
    <gs-group class="params" name="参数">
      <div class="inner">
        <div class="row"><gs-check off>添加</gs-check><gs-check off>差集</gs-check></div>
        <div class="row tall"><gs-check off>淡出</gs-check><gs-check off><span style="font-size:11px">Stroke lighten (v5)</span></gs-check></div>
        <div class="row"><gs-check off>相对</gs-check><gs-field dim plain off name="最小.:" value="0.0" unit="%" style="margin-left:13px;--label:30px;--w:36px"></gs-field></div>
        <div class="row limits"><gs-field dim plain off name="最大.:" value="100.0" unit="%" style="--label:30px;--w:36px"></gs-field></div>
        <div class="row tall"><gs-check off>限制深度比</gs-check><gs-field class="wide" off value="0 mic"></gs-field></div>
        <div class="row"><gs-field class="wide" dim off name="或密度比" value="0 mic" style="--label:91px"></gs-field></div>
        <div class="row"><gs-check off>那里回来 v5</gs-check><gs-check off style="margin-left:22px">通过点</gs-check><gs-field class="end small" plain off value="4"></gs-field></div>
        <div class="row"><gs-field dim off name="随机种子:" value="0" style="--label:70px;--w:72px"></gs-field><gs-field class="end small" dim plain off name="/" value="1" style="--label:10px"></gs-field></div>
        <div class="canvas"><svg><path d="M46 0v2M91 0v2M135 0v2M0 46h2M0 91h2M0 135h2" stroke="#999"/></svg></div>
        <div class="row tall" style="margin-top:2px"><gs-check off>碎片:</gs-check><gs-field off style="--w:60px"></gs-field><span class="end" style="color:#a29d92;font-size:11px;padding-right:4px">0</span></div>
        <div class="row tall" style="margin-top:4px"><gs-check off on>保持应用</gs-check><gs-button off style="--w:75px;margin-left:12px">应用</gs-button></div>
      </div>
    </gs-group>
  </gs-panel>`);

define("transform-window", /* css */`${row}
  .size { display: grid; grid-template-columns: 94px 100px auto; column-gap: 2px; align-items: center; padding: 3px 0 0 7px; }
  .size gs-field { --w: 82px; }
  .size .left { --label: 12px; }
  .size .right { --label: 16px; }
  .brace { grid-column: 3; grid-row: 1 / 3; font: bold 14px/16px "Liberation Sans"; }
  .mid { display: flex; align-items: flex-start; padding: 6px 0 0 7px; height: 56px; }
  .mid .checks { width: 57px; flex: none; }
  sup { width: 21px; padding-left: 3px; font-size: 12px; line-height: 12px; align-self: flex-start; }
  gs-select { --label: 15px; }
  .checks gs-check { height: 18px; }
`, `
  <gs-panel heading="变换" leaves="gor">
    <div class="size">
      <gs-field class="left" name="X:"></gs-field><gs-field class="right" name="W:"></gs-field><span class="brace">}</span>
      <gs-field class="left" name="Y:"></gs-field><gs-field class="right" name="H:"></gs-field>
    </div>
    <div class="mid">
      <svg width="46" height="34"><path d="M4 4h38v26H4z" fill="none" stroke="#888" stroke-width="1.500"/><g fill="#fff" stroke="#777"><path d="M1.500 1.500h5v5h-5zM20.500 1.500h5v5h-5zM39.500 1.500h5v5h-5zM1.500 14.500h5v5h-5zM39.500 14.500h5v5h-5zM1.500 27.500h5v5h-5zM20.500 27.500h5v5h-5zM39.500 27.500h5v5h-5z"/></g><path d="M20 14h6v6h-6z"/></svg>
      <div class="checks"><gs-check before on>对象</gs-check><gs-check before>模式</gs-check></div>
      <gs-select off icon="angle" name=":" value="0" style="margin:8px 0 0 26px"></gs-select><sup style="margin-top:6px">o</sup>
    </div>
    <div class="row" style="padding-left:48px">
      <gs-select off icon="skew" name=":" value="0" style="--label:17px;--w:50px"></gs-select><sup>o</sup>
      <gs-select off icon="skew2" name=":" value="0"></gs-select><sup>o</sup>
    </div>
    <div class="row" style="padding-left:50px;gap:54px"><gs-check before on>标尺线宽</gs-check><gs-check before on>比例</gs-check></div>
    <div class="row" style="padding:0 14px 0 4px;height:16px;--h:16px"><gs-button off style="--w:75px">水平对称</gs-button><gs-button off style="--w:75px">垂直对称</gs-button><gs-check class="end" before off>复制</gs-check></div>
  </gs-panel>`);

define("calc-window", /* css */`${row}
  .row { padding-left: 4px; --w: 51px; }
  .list { display: flex; flex-direction: column; justify-content: space-between; height: 76px; margin: 4px 6px 0 5px; border: 2px solid; border-color: #777 #f6f3ea #f6f3ea #777; background: #fff; }
  table { width: 100%; border-collapse: collapse; }
  th { height: 20px; padding: 0 3px; background: #ebe6df; border-bottom: 1px solid #a08a62; text-align: left; font-weight: normal; }
  th + th { width: 58px; border-left: 1px solid #a08a62; }
`, `
  <gs-panel heading="计算 (v5)" leaves="r" sizer>
    <div class="row"><gs-button>新建</gs-button><gs-button off>领域</gs-button><gs-button off>删除</gs-button><gs-button off>撤消</gs-button></div>
    <div class="list">
      <table><tr><th>Name</th><th>Value</th></tr></table>
      <gs-scrollbar style="--thumb:118px"></gs-scrollbar>
    </div>
  </gs-panel>`);

define("layer-window", /* css */`${row}
  .list { height: 90px; margin: -5px 4px 0; border: 2px solid; border-color: #777 #f6f3ea #f6f3ea #777; background: #fff; }
  .layer { display: flex; align-items: center; gap: 2px; height: 20px; padding: 0 2px; background: #8181fe; font-weight: bold; color: #111; }
  .layer i { width: 16px; height: 16px; border: 1px solid #000; background: #fff; }
  .layer b { flex: 1; padding-left: 1px; }
  .mark { width: 11px; height: 10px; border: 2px solid #d02a5c; }
  .row { gap: 2px; padding-left: 5px; --w: 31px; --h: 16px; }
`, `
  <gs-panel heading="图层" leaves="or" sizer>
    <div class="list">
      <div class="layer">
        <i><svg width="14" height="14"><path d="M1 8c3-5 9-5 12 0-3 4-9 4-12 0zM2 5c3-4 8-3 10 0" fill="none" stroke="#000"/><circle cx="7" cy="8" r="2.500"/></svg></i><i></i>
        <svg width="10" height="9"><path d="M3 1v7l6-3z" fill="#fff" stroke="#222"/></svg>
        <b>Layer1</b><span class="mark"></span>
      </div>
    </div>
    <div class="row"><gs-button>新建</gs-button><gs-button>子层</gs-button><gs-button>副本</gs-button><gs-button>删除</gs-button></div>
  </gs-panel>`);

define("palette-window", /* css */`${row}
  .tools { display: grid; grid-template-columns: repeat(3, 32px); padding: 0 3px; --icon: 25px; }
`, `
  <gs-panel narrow heading="Palette Bar">
    <div class="tools">
      <gs-tool active icon="arrow"></gs-tool><gs-tool icon="arrowplus"></gs-tool><gs-tool icon="arrowlight"></gs-tool>
      ${"arrow lasso lasso pen+ pencil+ tube+ hand+ smudge+ bird+ mesh+ blend+ frame+ ruler+ hand+ magnify dropper+ pencil+ text+ mesh meshcut blend+ stripes cone rosette+ smudge hatch comb pen+ planes+ smudge2+ move ruler+ target+".split(" ").map(name => `<gs-tool icon="${name.replace("+", "")}"${name.endsWith("+") ? " more" : ""}></gs-tool>`).join("")}
    </div>
  </gs-panel>`);

define("property-window", /* css */`${row}
  .row { padding: 0 15px 0 5px; }
  .marks { height: 38px; margin: 10px 16px 0 6px; }
  .marks div { display: flex; flex-direction: column; padding: 3px 6px; }
  .marks gs-check { height: 15px; }
  .list { position: relative; flex: none; height: 170px; margin: 3px 6px 0 1px; border: 2px solid; border-color: #777 #eee #eee #777; background: #fff; }
`, `
  <gs-panel heading="属性" leaves="gor" sizer>
    <div class="row" style="margin-top:5px"><gs-field plain name="名称:" style="--label:34px;--w:134px"></gs-field></div>
    <div class="row tall" style="padding-left:8px"><gs-check off>结果</gs-check><gs-button off class="end" style="--w:44px">解组</gs-button><gs-button off style="--w:44px;margin-left:2px">扩展</gs-button></div>
    <gs-group pale class="marks"><div><gs-check off>显示中心</gs-check><gs-check off>循环模式</gs-check></div></gs-group>
    <div class="list"></div>
  </gs-panel>`);

define("color-window", /* css */`${row}
  .list { display: flex; flex-direction: column; justify-content: space-between; height: 66px; margin: 0 9px 0 8px; border: 2px solid; border-color: #777 #f6f3ea #f6f3ea #777; background: #fff; }
  .list > svg { background: #000; }
  .low { display: flex; align-items: flex-start; padding: 4px; }
  .over { width: 60px; height: 42px; margin: 0 4px 0 4px; }
  .over gs-check { position: relative; top: -2px; height: 14px; padding-left: 6px; }
  .buttons { display: flex; flex-direction: column; gap: 3px; padding-top: 5px; --w: 38px; --h: 16px; }
`, `
  <gs-panel heading="颜色 &amp; 图案" leaves="or">
    <div class="list">
      <svg width="101" height="40">
        <defs><linearGradient id="k"><stop offset="0" stop-color="#222"/><stop offset="1" stop-color="#fff"/></linearGradient></defs>
        <path d="M1 1h18v18H1z" fill="#808080"/><path d="M1 19L19 1" stroke="#f00" stroke-width="2"/>
        <path d="M21 1h18v18H21z" fill="#fff"/><path d="M41 1h18v18H41z" fill="#f03e98"/><path d="M61 1h18v18H61z" fill="#3b383f"/><path d="M81 1h19v18H81z" fill="url(#k)"/>
        <path d="M1 21h18v18H1z" fill="#fff"/><path d="M3 23h14v14H3z" fill="#3b383f" stroke="#000"/>
        <path d="M21 21h18v18H21z" fill="#00a4e8"/><path d="M41 21h18v18H41z" fill="#fffe33"/>
        <path d="M61 21h18v18H61z" fill="#fff"/><path d="M64 21v18M70 21v18M76 21v18" stroke="#3b383f" stroke-width="3"/>
        <path d="M81 21h19v18H81z" fill="#ddd"/><g fill="none" stroke="#555" stroke-width="1.500"><circle cx="90" cy="30" r="8"/><circle cx="90" cy="30" r="5"/></g><circle cx="90" cy="30" r="2.500" fill="#444"/>
      </svg>
      <gs-scrollbar off></gs-scrollbar>
    </div>
    <div class="low">
      <svg width="42" height="44">
        <path d="M.5 3.500h27v27h-27z" fill="#f0f0f0" stroke="#000"/><path d="M2 29L26 5" stroke="#f00" stroke-width="2"/>
        <path d="M13.500 16.500h27v27h-27z" fill="#fff" stroke="#000"/><path d="M15 18h24v24H15z" fill="#3b383f"/><path d="M19.500 22.500h15v15h-15z" fill="#d6cbb0" stroke="#fff"/><path d="M20 23h7v7h-7z" fill="#eee" stroke="#222"/>
        <path d="M1.500 33.500h9v9h-9z" fill="#f4f4f4" stroke="#000"/><path d="M30 6h9v8M33 3l-3 3 3 3M36 11l3 3 3-3" fill="none" stroke="#000"/>
      </svg>
      <gs-group class="over" name="叠印"><gs-check off>填充</gs-check><gs-check>笔画</gs-check></gs-group>
      <div class="buttons"><gs-button>新建</gs-button><gs-button>删除</gs-button></div>
    </div>
  </gs-panel>`);

define("brush-window", /* css */`${row}
  .top { display: flex; height: 50px; padding: 0 11px 0 23px; gap: 15px; }
  .pick { width: 21px; height: 23px; margin-top: 15px; border: 2px solid; border-color: #888 #fff #fff #888; background: #f0f0f0; --icon: 17px; display: grid; place-items: center; }
  .pick + .pick { border-color: #fff #777 #777 #fff; }
  .preview { margin-left: auto; border: 1px solid #000; background: #f0f0f0; width: 47px; height: 47px; }
  .group { height: 92px; margin: 6px 6px 0; }
  .row { padding-left: 11px; height: 24px; }
  input[type=range] { appearance: none; width: 64px; height: 14px; margin-left: 6px; background: none; }
  input[type=range]::-webkit-slider-runnable-track { height: 6px; border: 1px solid #8a7a58; border-radius: 3px; background: linear-gradient(#fff 1px, #d8c8a8 2px, #fff); }
  input[type=range]::-webkit-slider-thumb { appearance: none; width: 12px; height: 12px; margin-top: -4px; border: 1px solid #8b7436; border-radius: 50%; background: radial-gradient(circle at 40% 40%, #fff3c4, #d9b55c); }
`, `
  <gs-panel heading="刷子 - 测试" leaves="gor">
    <div class="top">
      <button type="button" class="pick" aria-label="none"><gs-icon name="none"></gs-icon></button>
      <button type="button" class="pick" aria-label="brush"><gs-icon name="brush"></gs-icon></button>
      <svg class="preview" viewBox="0 0 45 45"><g fill="none" stroke="#999" stroke-dasharray="4 2"><circle cx="22" cy="22" r="15"/><path d="M22 4v38"/></g><path d="M19 9l3-4 3 4M36 19l3 3-3 3M9 19l-3 3 3 3" fill="none" stroke="#999"/></svg>
    </div>
    <gs-group class="group">
      <div class="row" style="margin-top:2px"><gs-field spin name="角度" value="?" style="--label:46px;--w:60px"></gs-field><input type="range" value="22" aria-label="角度"></div>
      <div class="row" style="margin-top:3px"><gs-field white name="圆角度" value="?" unit="%" style="--label:61px;--w:33px"></gs-field><input type="range" value="100" aria-label="圆角度"></div>
      <div class="row" style="margin-top:6px;padding-left:9px"><gs-select name="角度模式:" value="?" style="--label:63px;--w:65px"></gs-select></div>
    </gs-group>
  </gs-panel>`);

define("stroke-window", /* css */`${row}
  .head { display: grid; grid-template-columns: 115px 30px auto; align-items: center; padding-left: 5px; white-space: nowrap; }
  .head gs-field { --label: 54px; --w: 61px; }
  .caps { display: flex; --icon: 15px; }
  .caps button { display: grid; place-items: center; width: 21px; height: 22px; border: 1px solid; border-color: #fff #777 #777 #fff; background: #ececec; }
  .caps button:first-child { border-color: #777 #fff #fff #777; background: #f4f4f4; }
  .row { padding-left: 10px; }
  .choice { flex: none; height: 32px; margin: 0 8px 6px; }
  .choice div { display: flex; gap: 66px; margin-top: -2px; padding-left: 9px; }
  .last { height: 60px; margin: 0 8px; }
  .box { height: 40px; margin: 0 4px 0 6px; border: 2px solid; border-color: #777 #fff #fff #777; background: #f0f0f0; }
  .box span { display: block; margin-left: auto; width: 16px; height: 20px; border-left: 1px solid #fff; border-right: 1px solid #777; }
`, `
  <gs-panel cut heading="笔画 &amp; 填充" leaves="gor">
    <div class="head">
      <gs-field spin name="线宽:" value="100 mic"></gs-field><span>端点:</span>
      <div class="caps">${["capbutt", "capround", "capsquare"].map(name => `<button type="button" aria-label="${name}"><gs-icon name="${name}"></gs-icon></button>`).join("")}</div>
      <gs-field spin name="圆角大小:" value="10"></gs-field><span>接头:</span>
      <div class="caps">${["joinmiter", "joinround", "joinbevel"].map(name => `<button type="button" aria-label="${name}"><gs-icon name="${name}"></gs-icon></button>`).join("")}</div>
    </div>
    <div class="row" style="margin-top:6px"><gs-check>点线:</gs-check><gs-field plain unit="mic" style="--w:130px;margin-left:8px"></gs-field></div>
    <gs-group class="choice" name="螺旋填充规则" style="margin-top:8px"><div><gs-check radio on style="width:40px">非零</gs-check><gs-check radio>奇数</gs-check></div></gs-group>
    <gs-group class="choice" name="填充/笔画顺序"><div style="gap:38px"><gs-check radio on>填充/笔画</gs-check><gs-check radio>笔画/填充</gs-check></div></gs-group>
    <div class="row"><gs-check>笔画减淡(v5):</gs-check><gs-field class="end" style="--w:84px;margin-right:8px"></gs-field></div>
    <gs-group class="last" name="3D笔画选择" style="margin-top:2px"><div class="box"><span></span></div></gs-group>
  </gs-panel>`);

define("measure-window", /* css */`${row}
  .grid { display: grid; grid-template-columns: 102px auto; row-gap: 2px; padding: 4px 0 0 11px; --label: 13px; --w: 76px; }
  .mode { height: 58px; margin: 8px 5px 5px; }
  .row { padding-left: 5px; }
`, `
  <gs-panel heading="测量 (v4)" leaves="gor">
    <div class="grid">
      <gs-field off name="D:" value="0 mic"></gs-field><gs-field off name="H:" value="0 mic"></gs-field>
      <gs-field off name="A:" value="0 癈CW"></gs-field><gs-field off name="V:" value="0 mic"></gs-field>
    </div>
    <gs-group class="mode" name="图像模式"></gs-group>
    <div class="row"><gs-select name="光标:" value="Crosshair" style="--label:60px;--w:140px"></gs-select></div>
    <div class="row" style="margin-top:6px"><gs-field off name="光标大小" value="1000 mic" style="--label:60px;--w:143px"></gs-field></div>
  </gs-panel>`);

define("gs-toolbar", /* css */`
  :host {
    display: flex;
    align-items: center;
    height: 35px;
    width: max-content;
    padding: 0 2px 0 10px;
    border: solid #fbf8f0;
    border-width: 1px 2px 1px 0;
    background: linear-gradient(#d5c9ab, #e7decb 50%, #d8cdb2);
    position: relative;
  }
  :host([vertical]) {
    flex-direction: column;
    width: 35px;
    height: max-content;
    padding: 9px 0 1px;
    background: linear-gradient(#d5c9ab, #e9e1ce 50%, #d5c9ab);
    --icon: 23px;
  }
  .grip { position: absolute; left: 4px; top: 4px; bottom: 4px; width: 2px; background: #fffdf5; border-radius: 2px; }
  :host([vertical]) .grip { left: 4px; right: 4px; top: 4px; bottom: auto; width: auto; height: 3px; border: 1px solid #fffdf5; background: none; }
  ::slotted(hr) { align-self: stretch; width: 2px; margin: 0 1px; border: 0; background: linear-gradient(90deg, #7c8082 50%, #fff 50%); }
  :host([vertical]) ::slotted(hr) { width: auto; height: 2px; margin: 1px; background: linear-gradient(#7c8082 50%, #a9aaa2 50%); }
`, `<span class="grip"></span><slot></slot>`);

const tools = line => line.split(" ").map(name => name === "|" ? "<hr>" : `<gs-tool icon="${name.replace("*", "")}"${name.endsWith("*") ? " active" : ""}></gs-tool>`).join("");

define("gs-app", /* css */`
  :host { display: grid; grid-template-rows: 23px 21px 73px 1fr; height: 100vh; position: relative; overflow: hidden; background: #fff; }
  .title { display: flex; align-items: center; padding: 0 0 8px 8px; gap: 7px; --icon: 15px; font: 13px/16px "Open Sans", "Noto Sans", sans-serif; color: #111; white-space: pre; }
  .title .controls { display: flex; gap: 30px; margin-left: auto; }
  .title button, .menu button { display: grid; place-items: center; padding: 0; border: 0; background: none; }
  .title button { width: 14px; height: 14px; }
  .title button:last-child { width: 6px; }
  .menu { display: flex; align-items: center; gap: 18px; padding-left: 5px; background: #e9e0ce; border-bottom: 1px solid #9a9a96; --icon: 15px; }
  .menu gs-icon { margin-right: -9px; }
  .menu a { color: #000; text-decoration: none; line-height: 18px; }
  .menu .controls { display: flex; gap: 2px; margin-left: auto; }
  .menu .controls button { width: 17px; height: 17px; background: #fff; border: 1px solid #ddd; }
  .bars { padding-top: 1px; background: linear-gradient(#d5c9ab, #e9e1ce 50%, #d5c9ab); border-bottom: 2px solid #808080; }
  .bars gs-tool { height: 32px; }
  output { display: grid; place-items: center; width: 54px; height: 20px; margin: 0 5px; border: 2px solid; border-color: #7d6546 #f3eddf #f3eddf #7d6546; box-shadow: inset 1px 1px #000; font-weight: bold; font-size: 11px; }
  .zoom { padding-right: 6px; }
  .work { display: grid; grid-template-columns: 72px 1fr; min-height: 0; }
  .side { display: flex; align-items: flex-start; border-right: 2px solid #808080; background: linear-gradient(#d5c9ab, #e9e1ce 50%, #d5c9ab); }
  .sheet { display: grid; grid-template-columns: 331px 674px 1fr; }
  .sheet i { border-right: 1px solid #2be02b; }
  .desk > * { position: absolute; }
  .brand { right: 2px; bottom: 0; display: flex; align-items: flex-end; gap: 6px; color: #f4a024; }
  .brand .name { font: 21px/31px "Noto Sans CJK TC", "Noto Sans CJK SC", sans-serif; }
  .brand .site { color: #555; font: 10px/12px "DejaVu Sans", sans-serif; text-align: center; }
  .brand .disc { position: absolute; right: 10px; bottom: 0; opacity: .85; }
  .brand .words { display: flex; flex-direction: column; position: relative; }
  .close { width: 13px; height: 13px; display: grid; place-items: center; border: 0; border-radius: 50%; background: #888; color: #fff; }
`, `
  <header class="title">
    <gs-icon name="app"></gs-icon><span>GSLayout 1.49316 [Release version] &lt;32 bit&gt; -  @ 100.00% - [Layout1 *]</span>
    <div class="controls">
      <button type="button" aria-label="minimize"><svg width="11" height="11"><path d="M0 6h10" stroke="#000"/></svg></button>
      <button type="button" aria-label="maximize"><svg width="11" height="11"><path d="M1 1h9v9H1z" fill="none" stroke="#000"/></svg></button>
      <button type="button" aria-label="close"><svg width="6" height="11"><path d="M0 1l9 9M0 10l9-9" stroke="#000"/></svg></button>
    </div>
  </header>
  <nav class="menu">
    <gs-icon name="app"></gs-icon>
    ${["F文件", "E编辑", "O对象", "I滤镜", "I图像", "V查看", "W窗口", "H帮助"].map(item => `<a href="#">${item}</a>`).join("")}
    <div class="controls">
      <button type="button" aria-label="minimize"><svg width="7" height="9"><path d="M1 7h6" stroke="#678" stroke-width="2"/></svg></button>
      <button type="button" aria-label="restore"><svg width="9" height="9"><path d="M3 3V1h5v4H6M1 4h5v4H1z" fill="none" stroke="#678"/></svg></button>
    </div>
  </nav>
  <div class="bars">
    <gs-toolbar>${tools("new open import | outline fill* grad | pattern* nodes* select* | undo redo | flag back forward | cut copy paste | screen")}</gs-toolbar>
    <gs-toolbar class="zoom">${tools("zoomin zoomout zoomback | zoom100 zoomfit zoomall |")}<output>100%</output><output></output></gs-toolbar>
  </div>
  <div class="work">
    <div class="side">
      <gs-toolbar vertical>${tools("alignleft aligncenter alignright alignmid aligntop alignvert alignbottom | origin originshape | spreadh spreadv")}</gs-toolbar>
      <gs-toolbar vertical>${tools("union intersect subtract over | divide cross | points breaks | snip sniparea")}</gs-toolbar>
    </div>
    <div class="sheet"><i></i><i></i></div>
  </div>
  <div class="desk">
    <separation-window style="left:96px;top:240px;width:104px;height:336px"></separation-window>
    <variable-window style="left:1136px;top:104px;width:216px;height:504px"></variable-window>
    <calc-window style="left:1440px;top:240px;width:224px;height:136px"></calc-window>
    <transform-window style="left:1416px;top:64px;width:216px;height:192px"></transform-window>
    <property-window style="left:1672px;top:376px;width:224px;height:304px"></property-window>
    <palette-window style="left:1729px;top:193px;width:104px;height:409px"></palette-window>
    <layer-window style="left:1664px;top:240px;width:152px;height:136px"></layer-window>
    <color-window style="left:1496px;top:552px;width:176px;height:160px"></color-window>
    <brush-window style="left:1208px;top:672px;width:216px;height:192px"></brush-window>
    <stroke-window style="left:1408px;top:728px;width:216px;height:231px"></stroke-window>
    <measure-window style="left:1648px;top:696px;width:216px;height:192px"></measure-window>
    <svg style="left:1378px;bottom:0" width="28" height="18"><path d="M4 18C0 10 2 3 6 2c3 2 3 6 4 9h7c1-4 2-8 6-9 4 3 3 10 0 16z" fill="#f3e4c4" stroke="#4a3826" stroke-width="1.500"/><path d="M10 15v3M17 15v3" stroke="#4a3826" stroke-width="2"/></svg>
    <svg style="left:1608px;bottom:0" width="40" height="4"><path d="M2 4c4-5 28-5 34 0z" fill="#f9c8d4"/></svg>
    <button type="button" class="close" aria-label="close" style="left:1648px;bottom:6px"><svg width="7" height="7"><path d="M1 1l5 5M6 1L1 6" stroke="#fff" stroke-width="1.500"/></svg></button>
    <div class="brand">
      <svg class="disc" width="50" height="14"><path d="M0 14C6 4 14 0 25 0s19 4 25 14z" fill="#3f7ee0"/><path d="M16 9h18l-9 5z" fill="#fff"/></svg>
      <svg width="34" height="34"><path d="M2 3c8 3 10 20 2 29M32 3c-8 3-10 20-2 29M7 15c6 6 14 6 20 0M13 20v12M21 20v12" fill="none" stroke="#e2585c" stroke-width="4"/></svg>
      <div class="words"><span class="name">華印社區</span><span class="site">www.52cnp.com</span></div>
    </div>
  </div>
`);
</script>
</body>
</html>
